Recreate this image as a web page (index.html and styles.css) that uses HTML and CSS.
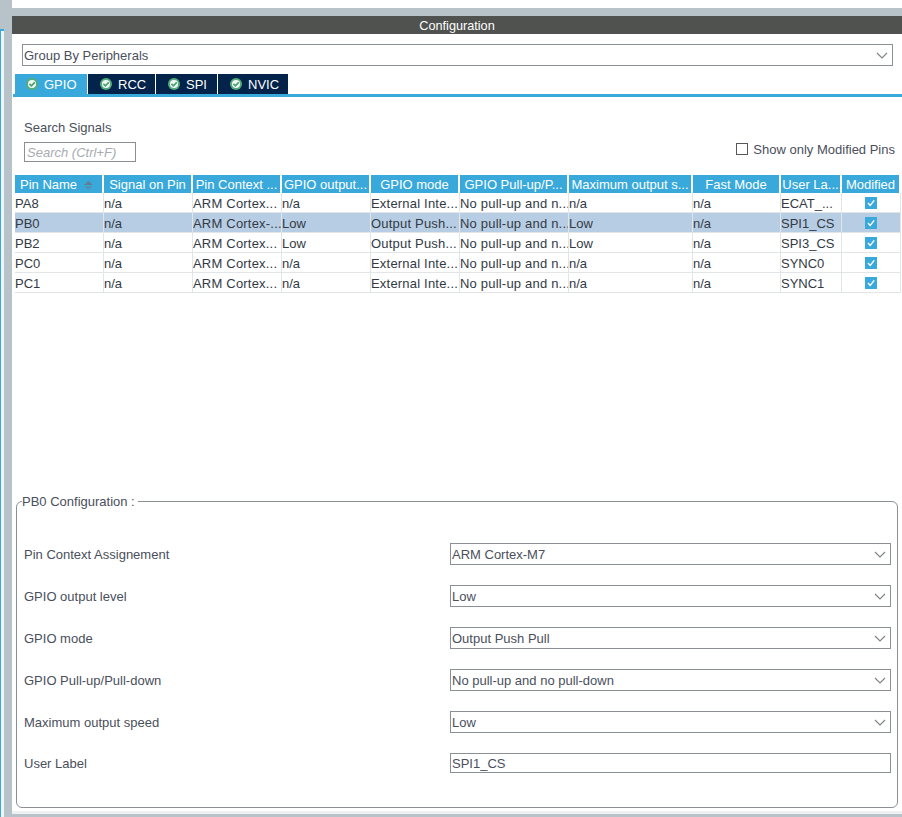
FILE: index.html
```html
<!DOCTYPE html>
<html>
<head>
<meta name="viewport" content="width=device-width, initial-scale=1">
<link rel="stylesheet" href="styles.css">
</head>
<body>

<svg class="defs" width="0" height="0">
  <symbol id="tabCheck" viewBox="0 0 12 12">
    <circle cx="6" cy="6" r="6" fill="#52ad7c"/>
    <circle cx="6" cy="6" r="4" fill="#f4f8f5"/>
    <path d="M3.4 5.9 L5.4 7.9 L8.8 4.3" fill="none" stroke="#45a370" stroke-width="1.7"/>
  </symbol>
  <symbol id="chevron" viewBox="0 0 12 7">
    <path d="M1 1 L6 6 L11 1" fill="none" stroke="#7f8589" stroke-width="1.2"/>
  </symbol>
  <symbol id="boxCheck" viewBox="0 0 12 12">
    <rect width="12" height="12" fill="#39a9dc"/>
    <path d="M3 6 L5.2 8.4 L9.2 3.4" fill="none" stroke="#fff" stroke-width="1.4"/>
  </symbol>
</svg>

<div class="side"></div>

<div class="main">
  <div class="title">Configuration</div>

  <div class="content">
    <div class="field groupBy">
      <span>Group By Peripherals</span>
      <svg class="arrow"><use href="#chevron"/></svg>
    </div>

    <div class="tabs">
      <div class="tab tab-gpio active"><svg class="tabIcon"><use href="#tabCheck"/></svg>GPIO</div>
      <div class="tab tab-rcc"><svg class="tabIcon"><use href="#tabCheck"/></svg>RCC</div>
      <div class="tab tab-spi"><svg class="tabIcon"><use href="#tabCheck"/></svg>SPI</div>
      <div class="tab tab-nvic"><svg class="tabIcon"><use href="#tabCheck"/></svg>NVIC</div>
    </div>

    <div class="searchRow">
      <div class="search">
        <div class="searchLabel">Search Signals</div>
        <div class="searchInput">Search (Ctrl+F)</div>
      </div>
      <div class="onlyModified"><span class="box"></span>Show only Modified Pins</div>
    </div>

    <table class="pins">
      <colgroup>
        <col class="c1"><col class="c2"><col class="c3"><col class="c4"><col class="c5">
        <col class="c6"><col class="c7"><col class="c8"><col class="c9"><col class="c10">
      </colgroup>
      <thead>
        <tr>
          <th class="pinName">Pin Name<svg class="sort" viewBox="0 0 9 9"><path d="M4.5 0 L9 4 L0 4 Z" fill="#5f7f92"/><path d="M0 5 L9 5 L4.5 9 Z" fill="#4f93b8"/></svg></th>
          <th>Signal on Pin</th>
          <th>Pin Context ...</th>
          <th>GPIO output...</th>
          <th>GPIO mode</th>
          <th>GPIO Pull-up/P...</th>
          <th>Maximum output s...</th>
          <th>Fast Mode</th>
          <th>User La...</th>
          <th>Modified</th>
        </tr>
      </thead>
      <tbody>
        <tr>
          <td>PA8</td><td>n/a</td><td class="cut">ARM Cortex...</td><td>n/a</td><td class="cut">External Inte...</td>
          <td class="cut">No pull-up and n...</td><td>n/a</td><td>n/a</td><td>ECAT_...</td>
          <td class="check"><svg class="tick"><use href="#boxCheck"/></svg></td>
        </tr>
        <tr class="selected">
          <td>PB0</td><td>n/a</td><td class="cut">ARM Cortex-...</td><td>Low</td><td class="cut">Output Push...</td>
          <td class="cut">No pull-up and n...</td><td>Low</td><td>n/a</td><td>SPI1_CS</td>
          <td class="check"><svg class="tick"><use href="#boxCheck"/></svg></td>
        </tr>
        <tr>
          <td>PB2</td><td>n/a</td><td class="cut">ARM Cortex...</td><td>Low</td><td class="cut">Output Push...</td>
          <td class="cut">No pull-up and n...</td><td>Low</td><td>n/a</td><td>SPI3_CS</td>
          <td class="check"><svg class="tick"><use href="#boxCheck"/></svg></td>
        </tr>
        <tr>
          <td>PC0</td><td>n/a</td><td class="cut">ARM Cortex...</td><td>n/a</td><td class="cut">External Inte...</td>
          <td class="cut">No pull-up and n...</td><td>n/a</td><td>n/a</td><td>SYNC0</td>
          <td class="check"><svg class="tick"><use href="#boxCheck"/></svg></td>
        </tr>
        <tr>
          <td>PC1</td><td>n/a</td><td class="cut">ARM Cortex...</td><td>n/a</td><td class="cut">External Inte...</td>
          <td class="cut">No pull-up and n...</td><td>n/a</td><td>n/a</td><td>SYNC1</td>
          <td class="check"><svg class="tick"><use href="#boxCheck"/></svg></td>
        </tr>
      </tbody>
    </table>

    <fieldset class="pinConfig">
      <legend>PB0 Configuration :</legend>
      <div class="configRow">
        <label>Pin Context Assignement</label>
        <div class="field"><span>ARM Cortex-M7</span><svg class="arrow"><use href="#chevron"/></svg></div>
      </div>
      <div class="configRow">
        <label>GPIO output level</label>
        <div class="field"><span>Low</span><svg class="arrow"><use href="#chevron"/></svg></div>
      </div>
      <div class="configRow">
        <label>GPIO mode</label>
        <div class="field"><span>Output Push Pull</span><svg class="arrow"><use href="#chevron"/></svg></div>
      </div>
      <div class="configRow">
        <label>GPIO Pull-up/Pull-down</label>
        <div class="field"><span>No pull-up and no pull-down</span><svg class="arrow"><use href="#chevron"/></svg></div>
      </div>
      <div class="configRow">
        <label>Maximum output speed</label>
        <div class="field"><span>Low</span><svg class="arrow"><use href="#chevron"/></svg></div>
      </div>
      <div class="configRow last">
        <label>User Label</label>
        <div class="field textField"><span>SPI1_CS</span></div>
      </div>
    </fieldset>
  </div>
</div>

</body>
</html>
```

FILE: styles.css
```css
* {
  box-sizing: border-box;
}

html, body {
  height: 100%;
}

body {
  margin: 0;
  height: 817px;
  overflow: hidden;
  display: flex;
  background: #b7c3c9;
  font-family: "Liberation Sans", Arial, sans-serif;
  font-size: 13px;
  color: #333a45;
}

.defs {
  position: absolute;
}

/* Edge of the panel to the left, cut off by the window */
.side {
  width: 4px;
  margin-right: 8px;
  margin-top: 29px;
  background: #eef6fb;
  border-left: 1px solid #39a9dc;
  border-top: 2px solid #39a9dc;
}

.main {
  width: 890px;
  padding-top: 16px;
  background: linear-gradient(#fff 8px, #b7c3c9 8px);
}

.title {
  height: 18px;
  line-height: 20px;
  background: #505250;
  color: #fff;
  font-size: 12.7px;
  text-align: center;
}

.content {
  height: 780px;
  background: #fff;
  border-bottom: 3px solid #eef0f2;
  padding-top: 10px;
}

/* Select and text fields */
.field {
  display: flex;
  align-items: center;
  justify-content: space-between;
  height: 22px;
  border: 1px solid #8a9095;
  padding: 0 3px 0 1px;
  background: #fff;
  color: #4a4f5c;
}

.arrow {
  width: 12px;
  height: 7px;
  margin-right: 1px;
}

.groupBy {
  margin: 0 9px 0 10px;
  padding-left: 1px;
}

/* Tabs */
.tabs {
  display: flex;
  gap: 1px;
  height: 23px;
  margin: 8px 0 0 1px;
  padding-left: 2px;
  border-bottom: 3px solid #39a9dc;
}

.tab {
  display: flex;
  align-items: center;
  height: 20px;
  background: #03234b;
  color: #fff;
  padding-left: 12px;
}

.tab.active {
  background: #39a9dc;
}

.tab-gpio { width: 72px; padding-left: 11px; }
.tab-rcc { width: 67px; }
.tab-spi { width: 61px; }
.tab-nvic { width: 70px; }

.tabIcon {
  width: 12px;
  height: 12px;
  margin-right: 6px;
}

/* Search row */
.searchRow {
  display: flex;
  justify-content: space-between;
  align-items: flex-end;
  height: 65px;
  padding: 24px 7px 0 12px;
}

.searchLabel {
  line-height: 15px;
  color: #4a4f5c;
  margin-bottom: 7px;
}

.searchInput {
  width: 112px;
  height: 20px;
  line-height: 19px;
  border: 1px solid #8a9095;
  padding-left: 2px;
  color: #a8abb0;
  font-style: italic;
}

.onlyModified {
  display: flex;
  align-items: center;
  margin-bottom: 5px;
  color: #4a4f5c;
}

.box {
  width: 12px;
  height: 12px;
  margin: -2px 5px 0 0;
  border: 1px solid #55595e;
}

/* Pin table */
.pins {
  table-layout: fixed;
  border-collapse: separate;
  border-spacing: 0;
  width: 886px;
  margin: 13px 0 0 3px;
}

.c1 { width: 89px; }
.c2 { width: 89px; }
.c3 { width: 89px; }
.c4 { width: 89px; }
.c5 { width: 89px; }
.c6 { width: 109px; }
.c7 { width: 124px; }
.c8 { width: 88px; }
.c9 { width: 61px; }
.c10 { width: 59px; }

.pins th {
  height: 18px;
  padding: 0;
  background: #39a9dc;
  border-right: 2px solid #fff;
  color: #fff;
  font-weight: normal;
  text-align: center;
  white-space: nowrap;
  overflow: hidden;
}

.pins th.pinName {
  text-align: left;
  padding-left: 5px;
}

.pins td {
  height: 20px;
  padding: 1px 0 0 0;
  border-right: 1px solid #e2e5e8;
  border-bottom: 1px solid #e2e5e8;
  white-space: nowrap;
  overflow: hidden;
}

.pins td.cut {
  letter-spacing: 0.2px;
}

.pins tr.selected td {
  background: #b7cde4;
}

.pins td.check {
  text-align: center;
  padding: 0;
}

.tick {
  display: block;
  width: 12px;
  height: 12px;
  margin: 0 auto;
}

/* Sort marker in the first header */
.sort {
  width: 9px;
  height: 9px;
  margin-left: 7px;
  vertical-align: -1px;
}

/* Config group */
.pinConfig {
  width: 882px;
  height: 314px;
  margin: 201px 0 0 4px;
  padding: 34px 6px 0 7px;
  border: 1px solid #8a9095;
  border-radius: 6px;
}

.pinConfig legend {
  padding: 0 3px 0 0;
  margin-left: -2px;
  color: #4a4f5c;
}

.configRow {
  display: flex;
  align-items: center;
  justify-content: space-between;
  margin-bottom: 20px;
  color: #4a4f5c;
}

.configRow .field {
  width: 441px;
}

.textField {
  height: 20px !important;
}
```
